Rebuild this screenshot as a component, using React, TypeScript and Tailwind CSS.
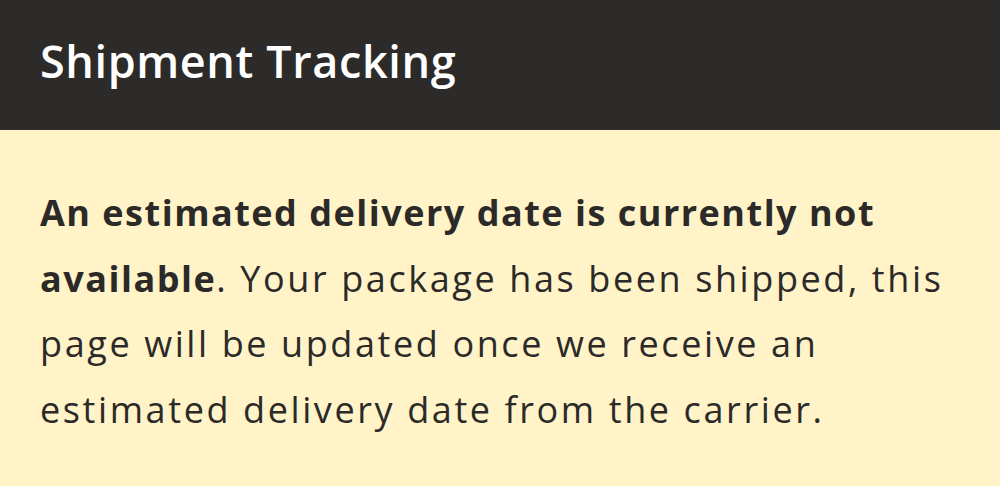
export default function App() {
  return (
    <div className="w-[1000px] h-[486px] bg-[#fff3c7] font-['Open_Sans',sans-serif] text-[#2b2a28]">
      <div className="h-[130px] bg-[#2d2b2a] px-10 flex items-center">
        <h1 className="text-[45px] font-semibold text-white leading-none tracking-[0.6px] pb-[10px]">Shipment Tracking</h1>
      </div>
      <div className="px-10 pt-[50px]">
        <p className="text-[36px] leading-[65.7px] tracking-[2.6px]">
          <strong className="font-bold tracking-[1.5px]">An estimated delivery date is currently not available</strong>. Your package has been shipped, this page will be updated once we receive an estimated delivery date from the carrier.
        </p>
      </div>
    </div>
  );
}
